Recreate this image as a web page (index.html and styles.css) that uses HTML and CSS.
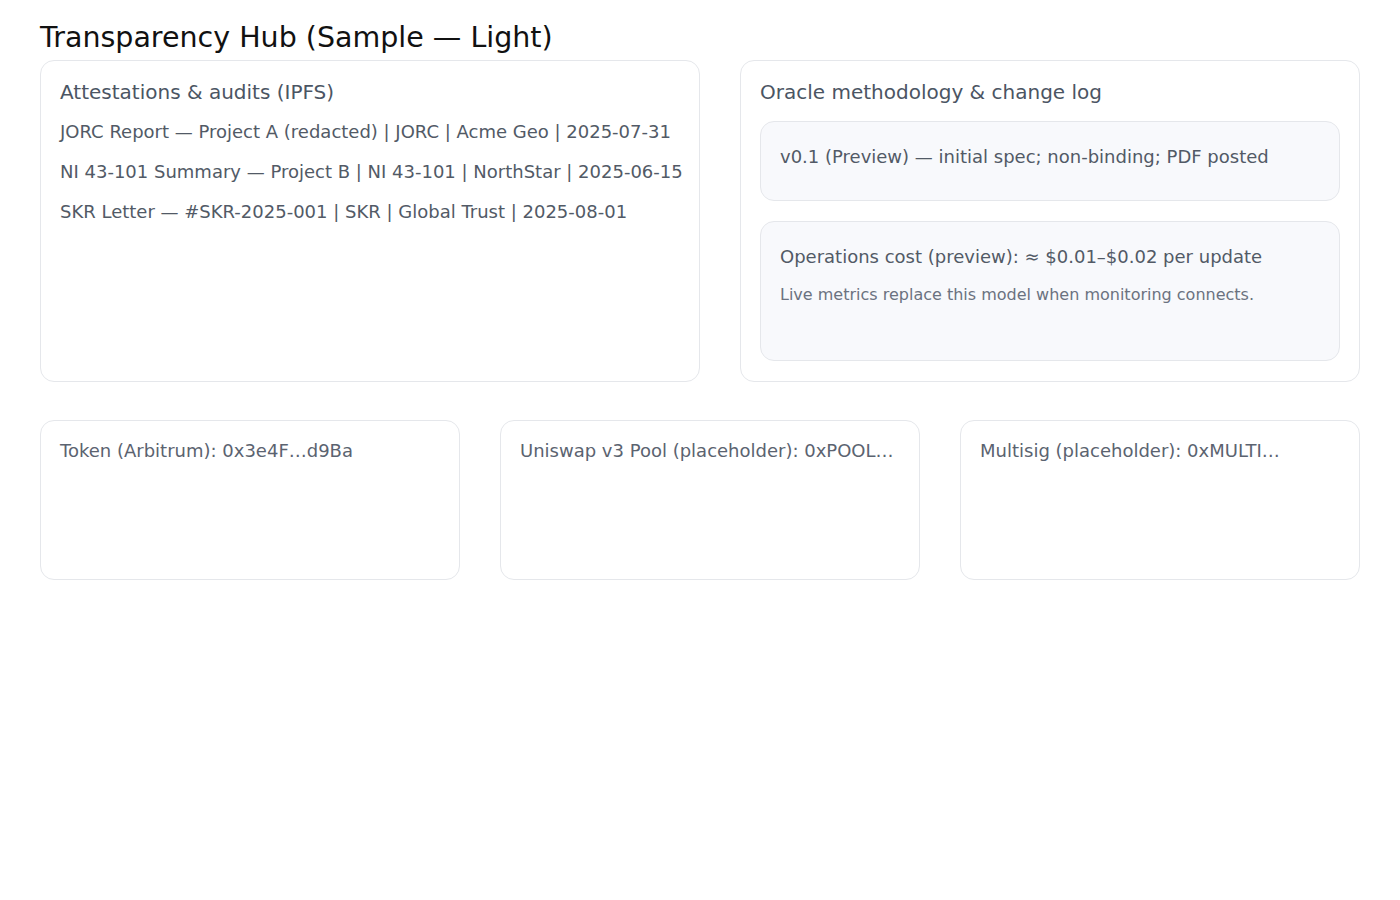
FILE: index.html
```html
<!DOCTYPE html>
<html lang="en">
<head>
<meta charset="utf-8">
<title>Transparency Hub</title>
<link rel="stylesheet" href="styles.css">
</head>
<body>
<main class="page">
  <h1 class="title">Transparency Hub (Sample — Light)</h1>
  <section class="row row-top">
    <div class="card">
      <h2 class="card-title">Attestations &amp; audits (IPFS)</h2>
      <ul class="list">
        <li>JORC Report — Project A (redacted) | JORC | Acme Geo | 2025-07-31</li>
        <li>NI 43-101 Summary — Project B | NI 43-101 | NorthStar | 2025-06-15</li>
        <li>SKR Letter — #SKR-2025-001 | SKR | Global Trust | 2025-08-01</li>
      </ul>
    </div>
    <div class="card">
      <h2 class="card-title">Oracle methodology &amp; change log</h2>
      <div class="stack">
        <div class="panel panel-short">
          <div class="panel-line">v0.1 (Preview) — initial spec; non-binding; PDF posted</div>
        </div>
        <div class="panel panel-tall">
          <div class="panel-line">Operations cost (preview): ≈ $0.01–$0.02 per update</div>
          <div class="panel-note">Live metrics replace this model when monitoring connects.</div>
        </div>
      </div>
    </div>
  </section>
  <section class="row row-bottom">
    <div class="card card-small"><div class="addr">Token (Arbitrum): 0x3e4F…d9Ba</div></div>
    <div class="card card-small"><div class="addr">Uniswap v3 Pool (placeholder): 0xPOOL…</div></div>
    <div class="card card-small"><div class="addr">Multisig (placeholder): 0xMULTI…</div></div>
  </section>
</main>
</body>
</html>
```
FILE: styles.css
```css
* { box-sizing: border-box; }
html, body { margin: 0; padding: 0; background: #ffffff; }
body {
  font-family: "DejaVu Sans", "Liberation Sans", sans-serif;
  color: #4b5563;
}
.page {
  padding: 20px 40px 40px 40px;
}
.title {
  margin: 0;
  font-size: 28.5px;
  font-weight: 400;
  line-height: 36px;
  color: #111111;
  height: 40px;
}
.row {
  display: grid;
  gap: 40px;
}
.row-top {
  grid-template-columns: 660px 620px;
  height: 320px;
}
.row-bottom {
  margin-top: 40px;
  grid-template-columns: 420px 420px 400px;
  height: 160px;
}
.card {
  border: 1px solid #e5e7eb;
  border-radius: 14px;
  padding: 20px 19px;
  background: #ffffff;
}
.card-title {
  margin: 0 0 18px 0;
  font-size: 20px;
  font-weight: 400;
  line-height: 22px;
  color: #4b5563;
}
.list {
  list-style: none;
  margin: 0;
  padding: 0;
}
.list li {
  font-size: 18px;
  line-height: 22px;
  margin-bottom: 18px;
  color: #525a66;
  white-space: nowrap;
}
.stack {
  display: flex;
  flex-direction: column;
  gap: 20px;
}
.panel {
  border: 1px solid #e5e7eb;
  border-radius: 14px;
  background: #f8f9fc;
  padding: 21px 19px 20px 19px;
}
.panel-short { height: 80px; }
.panel-tall { height: 140px; }
.panel-line {
  font-size: 18px;
  line-height: 28px;
  color: #525a66;
  white-space: nowrap;
}
.panel-note {
  margin-top: 14px;
  font-size: 16px;
  line-height: 20px;
  color: #6b7280;
}
.addr {
  font-size: 18px;
  line-height: 20px;
  color: #5b6370;
  white-space: nowrap;
}
```
